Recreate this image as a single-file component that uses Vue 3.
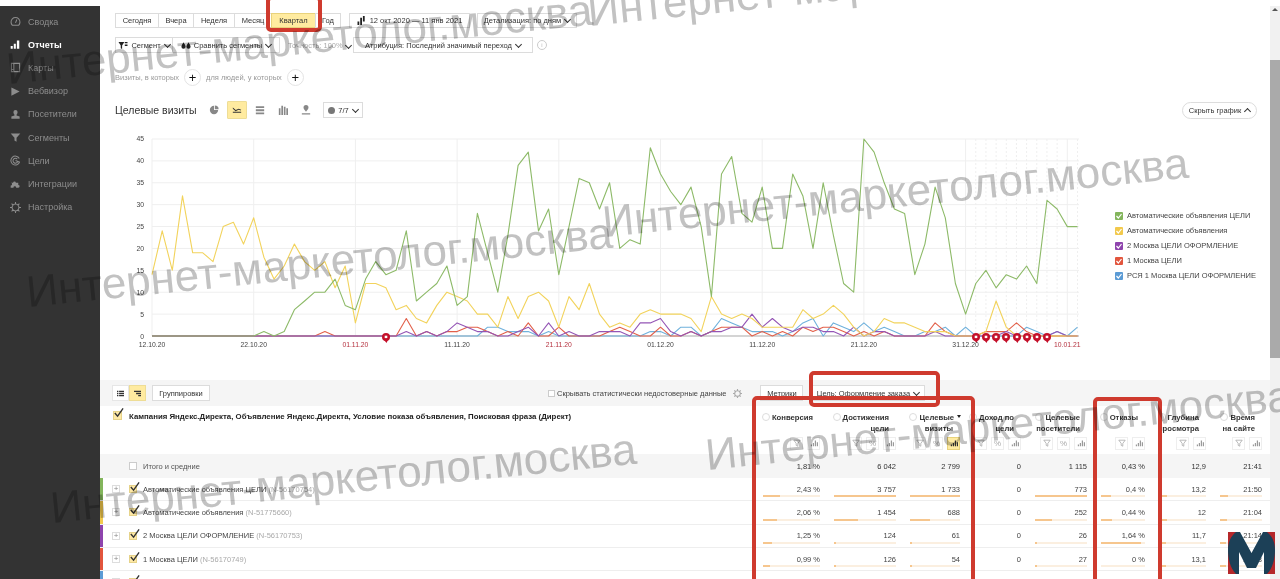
<script setup>
const menu = [
  { label: 'Сводка', outline: true, d: 'M3.5 13.5A6.5 6.5 0 1 1 12.5 13.5ZM8 10L10 5' },
  { label: 'Отчеты', active: true, d: 'M1 10h3v4H1zM5.5 7h3v7h-3zM10 2h3.500v12H10z' },
  { label: 'Карты', outline: true, d: 'M2 2h12v12H2zM5.500 2v12M2 11h3.500' },
  { label: 'Вебвизор', d: 'M2 2L14 8L2 14Z' },
  { label: 'Посетители', d: 'M5 4.500a3 3 0 1 1 6 0c0 2-1 3.500-1.500 4v1L14 11v3H2v-3l4.500-1.500v-1C6 8 5 6.500 5 4.500Z' },
  { label: 'Сегменты', d: 'M1 2h14L9.500 8.500V14l-3-1.500v-4Z' },
  { label: 'Цели', outline: true, d: 'M13.500 5A6.500 6.500 0 1 0 14 10M10.500 6A3.500 3.500 0 1 0 11 10M8 8L14.500 10.500' },
  { label: 'Интеграции', d: 'M1 7h3.500a2 2 0 1 1 4 0H12v3a2 2 0 1 1 0 4H9a2 2 0 1 0-4 0H1v-3a2 2 0 1 0 0-4Z' },
  { label: 'Настройка', outline: true, d: 'M8 3a5 5 0 1 0 .01 0ZM8 0v3M8 13v3M0 8h3M13 8h3M2.300 2.300l2.200 2.200M11.500 11.500l2.200 2.200M2.300 13.700l2.200-2.200M11.500 4.500l2.200-2.200' }
]

const periods = ['Сегодня', 'Вчера', 'Неделя', 'Месяц', 'Квартал', 'Год']

const X0 = 152
const DAY = 10.17
const Y0 = 336
const UNIT = 4.378

const dayX = (i) => X0 + i * DAY
const valY = (v) => Y0 - v * UNIT

function sparse(map) {
  const out = new Array(92).fill(0)
  for (const k in map) out[k] = map[k]
  return out
}

const green = [0,0,0,0,0,0,0,0,0,0,0,1,0,1,6,8,10,10,13,7,6,13,17,14,15,24,8,10,12,16,7,9,28,19,10,23,39,42,24,29,14,25,36,35,29,35,20,22,21,43,37,33,30,34,25,9,37,41,28,26,34,20,20,37,32,20,35,23,12,10,45,42,35,29,28,14,21,34,27,12,5,12,15,11,14,13,16,12,31,29,25,25]
const yellow = [14,24,15,32,19,19,17,25,26,21,27,18,13,16,21,17,15,17,11,16,3,12,12,11,6,7,4,3,7,10,9,8,5,5,2,9,4,9,10,8,2,9,6,12,5,2,3,2,5,6,5,5,5,4,1,9,5,4,5,4,2,2,2,2,6,4,5,7,5,2,0,1,4,3,3,2,1,1,1,0,0,0,1,8,2,0,0,0,0,0,0,0]
const purple = sparse({ 25:1,27:1,29:1,30:3,31:2,32:1,33:1,36:1,37:2,39:3,41:1,44:1,45:1,46:1,48:3,49:3,50:4,51:1,53:1,55:1,56:1,57:2,58:2,59:5,60:2,61:4,62:2,63:1,64:2,65:2,66:1,67:1,69:2,71:1,72:1,77:1,84:1,89:1 })
const red = sparse({ 17:1,25:4,27:1,29:1,30:1,31:2,32:2,33:1,35:1,37:3,40:2,45:1,46:2,47:1,50:2,53:1,55:1,56:2,57:2,58:2,60:1,62:1,64:2,65:1,66:2,67:2,68:1,70:1,72:1,77:3,78:1,82:1,83:1,84:1,85:3,86:1 })
const blue = sparse({ 33:2,34:2,35:1,36:1,37:1,39:1,49:1,50:1,52:2,53:2,55:1,56:4,57:3,58:2,59:1,60:1,61:1,63:1,64:3,65:4,67:3,68:2,69:1,70:3,71:1,72:2,73:1,76:1,77:1,78:2,80:2,86:2,87:1,89:1,91:2 })

const linePts = (arr) => arr.map((v, i) => `${dayX(i).toFixed(1)},${valY(v).toFixed(1)}`).join(' ')

const series = [
  { color: '#6fb1dc', pts: linePts(blue) },
  { color: '#e2604a', pts: linePts(red) },
  { color: '#9455b5', pts: linePts(purple) },
  { color: '#f2d35c', pts: linePts(yellow) },
  { color: '#8dba68', pts: linePts(green) }
]

const yTicks = [0, 5, 10, 15, 20, 25, 30, 35, 40, 45]
const xTicks = [
  { i: 0, t: '12.10.20' }, { i: 10, t: '22.10.20' }, { i: 20, t: '01.11.20', red: true },
  { i: 30, t: '11.11.20' }, { i: 40, t: '21.11.20', red: true }, { i: 50, t: '01.12.20' },
  { i: 60, t: '11.12.20' }, { i: 70, t: '21.12.20' }, { i: 80, t: '31.12.20' },
  { i: 90, t: '10.01.21', red: true }
]
const holidays = [81, 82, 83, 84, 85, 86, 87, 88, 89, 91]
const pins = [386, 976, 986, 996, 1006, 1017, 1027, 1037, 1047]

const legend = [
  { color: '#83b55c', label: 'Автоматические объявления ЦЕЛИ' },
  { color: '#f2c94c', label: 'Автоматические объявления' },
  { color: '#8e44ad', label: '2 Москва ЦЕЛИ ОФОРМЛЕНИЕ' },
  { color: '#e2553d', label: '1 Москва ЦЕЛИ' },
  { color: '#5b9bd5', label: 'РСЯ 1 Москва ЦЕЛИ ОФОРМЛЕНИЕ' }
]

const columns = [
  { lines: ['Конверсия'], tools: ['f', 'c'], total: '1,81 %' },
  { lines: ['Достижения', 'цели'], tools: ['f', 'p', 'c'], total: '6 042' },
  { lines: ['Целевые', 'визиты'], tools: ['f', 'p', 'c'], total: '2 799', sorted: true },
  { lines: ['Доход по', 'цели'], tools: ['f', 'p', 'c'], total: '0' },
  { lines: ['Целевые', 'посетители'], tools: ['f', 'p', 'c'], total: '1 115' },
  { lines: ['Отказы'], tools: ['f', 'c'], total: '0,43 %' },
  { lines: ['Глубина', 'просмотра'], tools: ['f', 'c'], total: '12,9' },
  { lines: ['Время', 'на сайте'], tools: ['f', 'c'], total: '21:41' }
]

const rows = [
  { color: '#83b55c', name: 'Автоматические объявления ЦЕЛИ', id: '(N-56170754)',
    cells: [['2,43 %', 29], ['3 757', 100], ['1 733', 100], ['0'], ['773', 100], ['0,4 %', 22], ['13,2', 18], ['21:50', 18]] },
  { color: '#f2c94c', name: 'Автоматические объявления', id: '(N-51775660)',
    cells: [['2,06 %', 25], ['1 454', 39], ['688', 40], ['0'], ['252', 33], ['0,44 %', 25], ['12', 16], ['21:04', 16]] },
  { color: '#8e44ad', name: '2 Москва ЦЕЛИ ОФОРМЛЕНИЕ', id: '(N-56170753)',
    cells: [['1,25 %', 15], ['124', 3], ['61', 3], ['0'], ['26', 3], ['1,64 %', 90], ['11,7', 15], ['21:14', 15]] },
  { color: '#e2553d', name: '1 Москва ЦЕЛИ', id: '(N-56170749)',
    cells: [['0,99 %', 12], ['126', 3], ['54', 3], ['0'], ['27', 3], ['0 %', 0], ['13,1', 15], ['21:33', 15]] },
  { color: '#5b9bd5', name: 'РСЯ 1 Москва ЦЕЛИ ОФОРМЛЕНИЕ', id: '(N-56170750)',
    cells: [['1,02 %', 12], ['98', 2], ['43', 2], ['0'], ['20', 2], ['0,5 %', 25], ['12,4', 15], ['20:47', 15]] }
]

const marks = [
  { x: 8, y: 47 }, { x: 589, y: -11 }, { x: 28, y: 270 },
  { x: 604, y: 200 }, { x: 52, y: 486 }, { x: 707, y: 433 }
]
</script>

<template>
  <div class="page">
    <aside class="side">
      <div v-for="m in menu" :key="m.label" class="side-item" :class="{ active: m.active }">
        <svg class="side-icon" :class="{ outline: m.outline }" viewBox="0 0 16 16"><path :d="m.d" /></svg>
        <span>{{ m.label }}</span>
      </div>
    </aside>

    <main class="main">
      <div class="bar bar-one">
        <div class="group">
          <button v-for="p in periods" :key="p" class="btn" :class="{ on: p === 'Квартал' }">{{ p }}</button>
        </div>
        <button class="btn date">
          <svg class="mini dark" viewBox="0 0 10 10"><path d="M0 6h2v4H0zM3 2h2v8H3zM6 0h2v6H6z" /></svg>
          12 окт 2020 — 11 янв 2021
        </button>
        <button class="btn detail">Детализация: по дням <i class="chev"></i></button>
      </div>

      <div class="bar bar-two">
        <button class="btn seg">
          <svg class="mini dark" viewBox="0 0 10 10"><path d="M0 1h6.500L4 5v4L2.500 8V5ZM7 1h3v1.500H7zM7 4h3v1.500H7z" /></svg>
          Сегмент <i class="chev"></i>
        </button>
        <button class="btn cmp">
          <svg class="mini dark" viewBox="0 0 12 10"><path d="M3 1C4 3 5.500 4.500 5.500 6.500a2.500 2.500 0 0 1-5 0C.5 4.500 2 3 3 1ZM9 1c1 2 2.500 3.500 2.500 5.500a2.500 2.500 0 0 1-5 0C6.500 4.500 8 3 9 1Z" /></svg>
          Сравнить сегменты <i class="chev"></i>
        </button>
        <span class="accuracy">Точность: 100% <i class="chev"></i></span>
        <button class="btn attr">Атрибуция: Последний значимый переход <i class="chev"></i></button>
        <span class="info">i</span>
      </div>

      <div class="bar bar-three">
        <span class="hint">Визиты, в которых</span>
        <span class="plus">+</span>
        <span class="hint">для людей, у которых</span>
        <span class="plus">+</span>
      </div>

      <div class="title-row">
        <h1 class="title">Целевые визиты</h1>
        <div class="views">
          <span class="view">
            <svg viewBox="0 0 12 12"><path d="M6 1a5 5 0 1 0 5 5H6Z" /><path d="M7 0.500a4.500 4.500 0 0 1 4.500 4.500H7Z" /></svg>
          </span>
          <span class="view on">
            <svg viewBox="0 0 12 12"><path d="M1 8h10v1.400H1zM1 3l3.500 3L8 4.500l3 1.200-.4 1L8 5.700 4.300 7.500 1 4.500Z" /></svg>
          </span>
          <span class="view">
            <svg viewBox="0 0 12 12"><path d="M1 1.500h10v2H1zM1 5h10v2.500H1zM1 9h10v2H1z" /></svg>
          </span>
          <span class="view">
            <svg viewBox="0 0 12 12"><path d="M1 4h2v8H1zM4 1h2v11H4zM7 2h2v10H7zM10 4h2v8h-2z" /></svg>
          </span>
          <span class="view">
            <svg viewBox="0 0 12 12"><path d="M6 0a3 3 0 0 1 3 3c0 2-2 3.500-3 5-1-1.500-3-3-3-5a3 3 0 0 1 3-3ZM1 10h10v1.500H1z" /></svg>
          </span>
        </div>
        <button class="btn count"><i class="dot"></i>7/7 <i class="chev"></i></button>
        <button class="hide-chart">Скрыть график <i class="chev up"></i></button>
      </div>

      <div class="chart-row">
        <svg class="chart" width="970" height="230" viewBox="115 125 970 230">
          <line v-for="t in yTicks" :key="t" x1="152" x2="1079" :y1="valY(t)" :y2="valY(t)" class="grid" />
          <line v-for="t in xTicks" :key="t.t" :x1="dayX(t.i)" :x2="dayX(t.i)" y1="139" y2="336" class="grid" />
          <line v-for="h in holidays" :key="h" :x1="dayX(h)" :x2="dayX(h)" y1="139" y2="336" class="grid dashed" />
          <line x1="152" x2="1079" y1="336" y2="336" class="base" />
          <polyline v-for="s in series" :key="s.color" :points="s.pts" :stroke="s.color" class="line" />
          <g v-for="p in pins" :key="p" :transform="`translate(${p} 337)`">
            <path d="M-2 3L0.500 6L2.500 2Z" fill="#c4102a" />
            <circle r="4" fill="#c4102a" />
            <rect x="-1.300" y="-1.300" width="2.600" height="2.400" fill="#fff" />
          </g>
          <text v-for="t in yTicks" :key="t" x="144" :y="valY(t) + 2.500" text-anchor="end" class="tick">{{ t }}</text>
          <text v-for="t in xTicks" :key="t.t" :x="dayX(t.i)" y="347" text-anchor="middle" class="tick" :class="{ redtick: t.red }">{{ t.t }}</text>
        </svg>
        <ul class="legend">
          <li v-for="l in legend" :key="l.label">
            <span class="swatch" :style="{ background: l.color }">
              <svg viewBox="0 0 8 8"><path d="M1.500 4L3.300 6L6.500 2" /></svg>
            </span>
            {{ l.label }}
          </li>
        </ul>
      </div>

      <div class="tbar">
        <div class="switch">
          <span class="sw">
            <svg viewBox="0 0 10 10"><path d="M0 1h2v2H0zM3 1h7v2H3zM0 4h2v2H0zM3 4h7v2H3zM0 7h2v2H0zM3 7h7v2H3z" /></svg>
          </span>
          <span class="sw on">
            <svg viewBox="0 0 10 10"><path d="M0 1h10v2H0zM3 4h7v2H3zM6 7h4v2H6z" /></svg>
          </span>
        </div>
        <button class="btn tbtn groups">Группировки</button>
        <label class="stat"><i class="box"></i>Скрывать статистически недостоверные данные</label>
        <svg class="gear" viewBox="0 0 16 16"><path d="M8 3a5 5 0 1 0 .01 0ZM8 0v3M8 13v3M0 8h3M13 8h3M2.300 2.300l2.200 2.200M11.500 11.500l2.200 2.200M2.300 13.700l2.200-2.200M11.500 4.500l2.200-2.200" /></svg>
        <button class="btn tbtn metrics">Метрики</button>
        <button class="btn tbtn goal">Цель: Оформление заказа <i class="chev"></i></button>
      </div>

      <div class="thead tgrid">
        <div class="dims">
          <span class="check big">
            <svg viewBox="0 0 12 12"><path d="M2 5.500L5 9L11 0.500" /></svg>
          </span>
          <b>Кампания Яндекс.Директа, Объявление Яндекс.Директа, Условие показа объявления, Поисковая фраза (Директ)</b>
        </div>
        <div v-for="c in columns" :key="c.lines[0] + c.total" class="hcell">
          <div class="hname">
            <div v-for="(l, i) in c.lines" :key="l">
              <i v-if="i === 0" class="ring"></i>{{ l }}<i v-if="i === 0 && c.sorted" class="sort"></i>
            </div>
          </div>
          <div class="tools">
            <span v-for="t in c.tools" :key="t" class="tool" :class="{ on: c.sorted && t === 'c' }">
              <svg v-if="t === 'f'" viewBox="0 0 10 10" class="t-line"><path d="M1 1.500h8L6 5.500V9L4 8V5.500Z" /></svg>
              <template v-else-if="t === 'p'">%</template>
              <svg v-else viewBox="0 0 10 10" class="t-fill"><path d="M1 7h1.500v2H1zM3.500 5H5v4H3.500zM6 2h1.500v7H6zM8.500 4H10v5H8.500z" /></svg>
            </span>
          </div>
        </div>
      </div>

      <div class="totals tgrid">
        <div class="dims total-name">
          <span class="check blank"></span>
          <span>Итого и средние</span>
        </div>
        <div v-for="c in columns" :key="c.total" class="vcell"><span>{{ c.total }}</span></div>
      </div>

      <div v-for="r in rows" :key="r.id" class="row tgrid">
        <div class="dims row-name" :style="{ borderLeftColor: r.color }">
          <span class="expand">+</span>
          <span class="check">
            <svg viewBox="0 0 12 12"><path d="M2 5.500L5 9L11 0.500" /></svg>
          </span>
          <span>{{ r.name }} <em>{{ r.id }}</em></span>
        </div>
        <div v-for="(cell, i) in r.cells" :key="i" class="vcell">
          <span>{{ cell[0] }}</span>
          <div v-if="cell.length > 1" class="track"><div class="fill" :style="{ width: cell[1] + '%' }"></div></div>
        </div>
      </div>
    </main>

    <div class="scroll">
      <span class="arrow"></span>
      <div class="thumb"></div>
    </div>

    <div class="hl hl-period"></div>
    <div class="hl hl-goal"></div>
    <div class="hl hl-conv"></div>
    <div class="hl hl-bounce"></div>

    <div v-for="(w, i) in marks" :key="i" class="mark" :style="{ left: w.x + 'px', top: w.y + 'px' }">Интернет-маркетолог.москва</div>

    <svg class="logo" width="47" height="42" viewBox="0 0 47 42">
      <rect width="9" height="42" fill="#b5272a" />
      <rect x="38" width="9" height="42" fill="#b5272a" />
      <path d="M8 42C2 36 0 26 0 18C0 10 3 4 8 0H12L23.500 21L35 0H39C44 4 47 10 47 18C47 26 45 36 39 42H36V20L28 36H19L11 20V42Z" fill="#1c4057" />
    </svg>
  </div>
</template>

<style scoped>
.page {
  position: relative;
  display: flex;
  width: 1280px;
  height: 579px;
  overflow: hidden;
  background: #fff;
  color: #333;
  font-family: "Liberation Sans", Arial, sans-serif;
  font-size: 7.500px;
  filter: blur(0.3px);
}

.side {
  flex: none;
  width: 100px;
  margin-top: 6px;
  padding-top: 4px;
  background: #333;
}
.side-item {
  display: flex;
  align-items: center;
  gap: 7px;
  height: 23.200px;
  padding-left: 10px;
  color: #8d8d8d;
  font-size: 9px;
}
.side-item.active {
  color: #fff;
  font-weight: 700;
}
.side-icon {
  width: 11px;
  height: 11px;
  fill: #8d8d8d;
}
.side-icon.outline {
  fill: none;
  stroke: #8d8d8d;
  stroke-width: 1.500;
}
.active .side-icon {
  fill: #fff;
}

.main {
  flex: none;
  width: 1170px;
  height: 579px;
  overflow: hidden;
}

.bar {
  display: flex;
  align-items: center;
  padding-left: 15px;
}
.bar-one {
  height: 15px;
  margin-top: 13px;
}
.bar-two {
  height: 16px;
  margin-top: 9px;
}
.bar-three {
  height: 17px;
  margin-top: 16px;
  color: #999;
}

.btn {
  display: inline-flex;
  align-items: center;
  justify-content: center;
  gap: 3px;
  height: 100%;
  padding: 0;
  border: 1px solid #dcdcdc;
  background: #fff;
  color: #333;
  font: inherit;
  white-space: nowrap;
}
.btn.on {
  background: #ffeba0;
  border-color: #e8d27c;
}
.group {
  display: flex;
  height: 100%;
}
.group .btn {
  margin-left: -1px;
}
.group .btn:nth-child(1) { width: 44px; margin-left: 0; }
.group .btn:nth-child(2) { width: 36px; }
.group .btn:nth-child(3) { width: 42px; }
.group .btn:nth-child(4) { width: 38px; }
.group .btn:nth-child(5) { width: 45px; }
.group .btn:nth-child(6) { width: 26px; }
.date {
  width: 121px;
  margin-left: 8px;
}
.detail {
  width: 100px;
  margin-left: 7px;
}
.seg {
  width: 58px;
}
.cmp {
  width: 108px;
  margin-left: -1px;
}
.accuracy {
  width: 65px;
  margin-left: 8px;
  color: #aaa;
  white-space: nowrap;
}
.attr {
  width: 180px;
}
.info {
  width: 8px;
  height: 8px;
  margin-left: 4px;
  border: 1px solid #ccc;
  border-radius: 50%;
  color: #bbb;
  font-size: 6px;
  line-height: 8px;
  text-align: center;
}
.mini {
  width: 10px;
  height: 9px;
  fill: #222;
}

.chev {
  display: inline-block;
  width: 4px;
  height: 4px;
  margin: -2px 0 0 1px;
  border-right: 1px solid #333;
  border-bottom: 1px solid #333;
  transform: rotate(45deg);
}
.chev.up {
  margin-top: 2px;
  transform: rotate(225deg);
}

.plus {
  display: flex;
  align-items: center;
  justify-content: center;
  width: 15px;
  height: 15px;
  margin: 0 5px;
  border: 1px solid #e4e4e4;
  border-radius: 50%;
  color: #111;
  font-size: 13px;
  line-height: 1;
}

.title-row {
  display: flex;
  align-items: center;
  height: 20px;
  margin-top: 14px;
  padding-left: 15px;
}
.title {
  width: 87.500px;
  margin: 0;
  color: #333;
  font-size: 10.500px;
  font-weight: 400;
  white-space: nowrap;
}
.views {
  display: flex;
  height: 100%;
}
.view {
  display: flex;
  align-items: center;
  justify-content: center;
  box-sizing: border-box;
  width: 20px;
  height: 18px;
  margin: 1px 1.500px 0;
  border-radius: 1px;
}
.view svg {
  width: 10px;
  height: 10px;
  fill: #888;
}
.view.on {
  background: #ffeba0;
  border: 1px solid #eedd96;
}
.view.on svg {
  fill: #333;
}
.count {
  width: 40px;
  height: 16px;
  margin-left: 5.500px;
}
.dot {
  width: 7px;
  height: 7px;
  border-radius: 50%;
  background: #777;
}
.hide-chart {
  display: inline-flex;
  align-items: center;
  justify-content: center;
  gap: 3px;
  width: 75px;
  height: 17px;
  margin-left: auto;
  margin-right: 13px;
  padding: 0;
  border: 1px solid #ddd;
  border-radius: 9px;
  background: #fff;
  color: #333;
  font: inherit;
}

.chart-row {
  display: flex;
  height: 230px;
  margin-top: 5px;
  padding-left: 15px;
}
.chart {
  flex: none;
  overflow: visible;
}
.grid {
  stroke: #efefef;
  stroke-width: 1;
}
.grid.dashed {
  stroke-dasharray: 2 2;
}
.base {
  stroke: #c9c9c9;
  stroke-width: 1.500;
}
.line {
  fill: none;
  stroke-width: 1.100;
  stroke-linejoin: round;
}
.tick {
  fill: #444;
  font-size: 6.800px;
}
.redtick {
  fill: #b5323f;
}

.legend {
  margin: 83px 0 0 30px;
  padding: 0;
  list-style: none;
  white-space: nowrap;
  color: #444;
}
.legend li {
  display: flex;
  align-items: center;
  gap: 4px;
  height: 15px;
}
.swatch {
  display: flex;
  width: 8px;
  height: 8px;
  border-radius: 1px;
}
.swatch svg {
  fill: none;
  stroke: #fff;
  stroke-width: 1.200;
}

.tbar {
  display: flex;
  align-items: center;
  height: 26px;
  margin-top: 25px;
  padding-left: 12px;
  background: #f5f5f5;
}
.switch {
  display: flex;
  height: 16px;
}
.sw {
  display: flex;
  align-items: center;
  justify-content: center;
  box-sizing: border-box;
  width: 17px;
  height: 16px;
  background: #fff;
  border: 1px solid #e6e6e6;
}
.sw.on {
  background: #ffeba0;
  border-color: #eedd96;
}
.sw svg {
  width: 7px;
  height: 7px;
  fill: #333;
}
.tbtn {
  height: 16px;
}
.groups {
  width: 58px;
  margin-left: 6px;
}
.stat {
  display: flex;
  align-items: center;
  gap: 2px;
  margin-left: 338px;
  color: #444;
  white-space: nowrap;
}
.box {
  box-sizing: border-box;
  width: 7px;
  height: 7px;
  border: 1px solid #ccc;
  background: #fff;
}
.gear {
  width: 9px;
  height: 9px;
  margin-left: 7px;
  fill: none;
  stroke: #aaa;
  stroke-width: 2;
}
.metrics {
  width: 43px;
  margin-left: 18px;
}
.goal {
  width: 115px;
  margin-left: 7px;
}

.tgrid {
  display: grid;
  grid-template-columns: 649px 71px 76px 64px 61px 66px 58px 61px 56px 8px;
}
.thead {
  height: 48px;
}
.dims {
  display: flex;
  align-items: flex-start;
  white-space: nowrap;
}
.thead .dims {
  padding: 5px 0 0 13px;
}
.thead .dims b {
  margin: 1px 0 0 7px;
  color: #222;
  font-size: 7.850px;
}
.check {
  display: block;
  flex: none;
  box-sizing: border-box;
  width: 8px;
  height: 8px;
  border: 1px solid #e6d38a;
  background: #ffe9a6;
}
.check svg {
  display: block;
  width: 11px;
  height: 11px;
  margin: -4px 0 0 -1px;
  fill: none;
  stroke: #333;
  stroke-width: 1.500;
}
.check.big {
  width: 9px;
  height: 9px;
}
.check.blank {
  background: #fff;
  border-color: #ccc;
}

.hcell {
  display: flex;
  flex-direction: column;
  padding-top: 7px;
}
.hname {
  height: 23.500px;
  padding-right: 7px;
  line-height: 10.500px;
  font-size: 7.700px;
  font-weight: 700;
  color: #333;
  text-align: right;
  white-space: nowrap;
}
.ring {
  display: inline-block;
  width: 6px;
  height: 6px;
  margin-right: 2px;
  border: 1px solid #ddd;
  border-radius: 50%;
  vertical-align: -1px;
}
.sort {
  display: inline-block;
  margin: 0 -8px 0 3px;
  border: 2.500px solid transparent;
  border-top: 3px solid #222;
  border-bottom: 0;
  vertical-align: 2px;
}
.tools {
  display: flex;
  justify-content: flex-end;
  gap: 4px;
}
.tool {
  display: flex;
  align-items: center;
  justify-content: center;
  box-sizing: border-box;
  width: 13px;
  height: 13px;
  border: 1px solid #eee;
  color: #aaa;
  font-size: 8px;
}
.tool.on {
  background: #ffeba0;
  border-color: #e8d27c;
}
.tool svg {
  width: 8px;
  height: 8px;
}
.t-line {
  fill: none;
  stroke: #aaa;
}
.t-fill {
  fill: #999;
}
.tool.on .t-fill {
  fill: #333;
}

.totals {
  height: 24px;
  background: #f5f5f5;
}
.total-name {
  align-items: center;
  gap: 6px;
  padding-left: 29px;
  color: #555;
}
.row {
  height: 23.300px;
  border-bottom: 1px solid #eee;
  box-sizing: border-box;
}
.row-name {
  align-items: center;
  height: 100%;
  padding-left: 9px;
  border-left: 3px solid transparent;
  color: #444;
}
.row-name em {
  color: #aaa;
  font-style: normal;
}
.expand {
  display: flex;
  align-items: center;
  justify-content: center;
  box-sizing: border-box;
  width: 8px;
  height: 8px;
  margin-right: 9px;
  border: 1px solid #ddd;
  color: #888;
  font-size: 8px;
  line-height: 1;
}
.row .check {
  margin-right: 6px;
}
.vcell {
  position: relative;
  display: flex;
  align-items: center;
  justify-content: flex-end;
  padding-left: 14px;
  color: #444;
  white-space: nowrap;
}
.totals .vcell {
  color: #333;
}
.track {
  position: absolute;
  left: 14px;
  right: 0;
  bottom: 3px;
  height: 2px;
  background: #fbefe0;
}
.fill {
  height: 100%;
  background: #f6c68e;
}

.scroll {
  flex: none;
  display: flex;
  flex-direction: column;
  width: 10px;
  margin-top: 6px;
  background: #f1f1f1;
}
.arrow {
  width: 0;
  height: 0;
  margin: 2px 0 0 2px;
  border: 3px solid transparent;
  border-top: 0;
  border-bottom: 3px solid #555;
}
.thumb {
  height: 298px;
  margin-top: 49px;
  background: #aaa;
}

.hl {
  position: absolute;
  box-sizing: border-box;
  border: 4px solid #cf3a2e;
  border-radius: 5px;
}
.hl-period {
  left: 266px;
  top: -4px;
  width: 56px;
  height: 36px;
}
.hl-goal {
  left: 809px;
  top: 371px;
  width: 131px;
  height: 36px;
}
.hl-conv {
  left: 752px;
  top: 396px;
  width: 223px;
  height: 200px;
}
.hl-bounce {
  left: 1093px;
  top: 397px;
  width: 69px;
  height: 200px;
}

.mark {
  position: absolute;
  color: #c2c2c2;
  font-size: 44px;
  line-height: 1;
  white-space: nowrap;
  transform-origin: 0 85%;
  transform: rotate(-5.800deg);
  mix-blend-mode: multiply;
  pointer-events: none;
}

.logo {
  position: absolute;
  left: 1228px;
  top: 532px;
}
</style>
